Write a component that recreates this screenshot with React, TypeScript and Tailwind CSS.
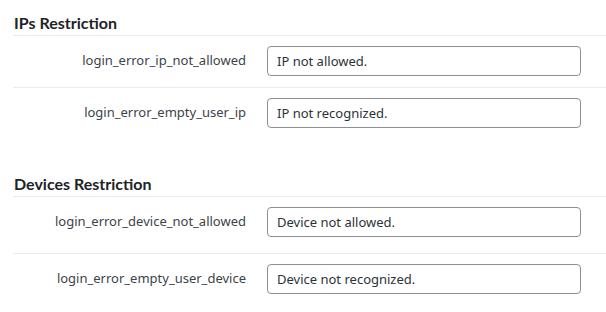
const SECTIONS = [
  {
    title: "IPs Restriction",
    rows: [
      { key: "login_error_ip_not_allowed", value: "IP not allowed.", pb: "pb-[11px]" },
      { key: "login_error_empty_user_ip", value: "IP not recognized.", pb: "pb-[11px]" },
    ],
  },
  {
    title: "Devices Restriction",
    rows: [
      { key: "login_error_device_not_allowed", value: "Device not allowed.", pb: "pb-[16px]" },
      { key: "login_error_empty_user_device", value: "Device not recognized.", pb: "pb-[11px]" },
    ],
  },
]

export default function App() {
  return (
    <div className="w-[606px] h-[312px] bg-white overflow-hidden font-['Noto_Sans',sans-serif] pl-[13px]">
      {SECTIONS.map((section, i) => (
        <section key={section.title} className={i > 0 ? "mt-[22px]" : ""}>
          {/* Heading */}
          <h2 className="pt-[13px] pb-[2px] pl-[1px] font-['Lato',sans-serif] text-[16px] leading-[20px] font-bold text-[#1d2327]">
            {section.title}
          </h2>

          {/* Rows */}
          {section.rows.map((row) => (
            <div key={row.key} className={`flex items-center border-t border-[#ebebeb] pt-[10px] ${row.pb}`}>
              <label className="w-[233px] text-right text-[13px] text-[#3c434a]">{row.key}</label>
              <input
                type="text"
                readOnly
                value={row.value}
                className="ml-[21px] w-[314px] h-[30px] px-[9px] rounded-[4px] border border-[#8c8f94] text-[13px] text-[#2c3338] outline-none"
              />
            </div>
          ))}
        </section>
      ))}
    </div>
  )
}
